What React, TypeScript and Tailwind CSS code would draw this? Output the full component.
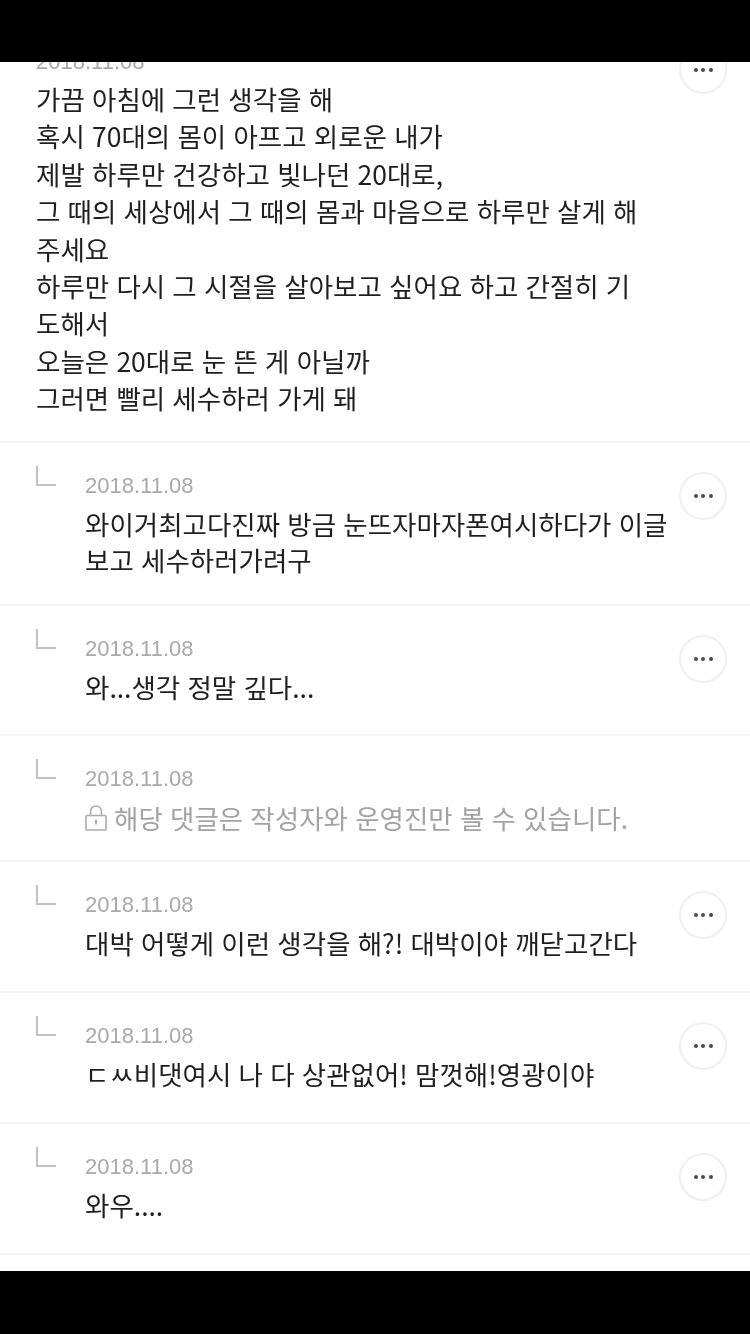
import type { ReactElement } from "react";

const font = "font-['Noto_Sans_CJK_KR','Noto_Sans',sans-serif]";

interface Reply {
  lines: string[];
  locked?: boolean;
}

const replies: Reply[] = [
  { lines: ["와이거최고다진짜 방금 눈뜨자마자폰여시하다가 이글", "보고 세수하러가려구"] },
  { lines: ["와...생각 정말 깊다..."] },
  { lines: ["해당 댓글은 작성자와 운영진만 볼 수 있습니다."], locked: true },
  { lines: ["대박 어떻게 이런 생각을 해?! 대박이야 깨닫고간다"] },
  { lines: ["ㄷㅆ비댓여시 나 다 상관없어! 맘껏해!영광이야"] },
  { lines: ["와우...."] },
];

const firstComment = [
  "가끔 아침에 그런 생각을 해",
  "혹시 70대의 몸이 아프고 외로운 내가",
  "제발 하루만 건강하고 빛나던 20대로,",
  "그 때의 세상에서 그 때의 몸과 마음으로 하루만 살게 해",
  "주세요",
  "하루만 다시 그 시절을 살아보고 싶어요 하고 간절히 기",
  "도해서",
  "오늘은 20대로 눈 뜬 게 아닐까",
  "그러면 빨리 세수하러 가게 돼",
];

function MoreButton(): ReactElement {
  return (
    <button
      type="button"
      aria-label="더보기"
      className="flex size-[48px] shrink-0 items-center justify-center gap-[3.5px] rounded-full border-2 border-[#efefef] bg-white"
    >
      <span className="size-[4px] rounded-full bg-[#4a4a4a]" />
      <span className="size-[4px] rounded-full bg-[#4a4a4a]" />
      <span className="size-[4px] rounded-full bg-[#4a4a4a]" />
    </button>
  );
}

function ReplyArrow(): ReactElement {
  return (
    <svg width="22" height="22" viewBox="0 0 22 22" fill="none" className="block">
      <path d="M2 1V20H21" stroke="#c2c2c2" strokeWidth="2" />
    </svg>
  );
}

function LockIcon(): ReactElement {
  return (
    <svg width="22" height="26" viewBox="0 0 22 26" fill="none" className="mr-[7px] shrink-0">
      <rect x="1" y="10.5" width="20" height="14.5" rx="1" stroke="#aeaeae" strokeWidth="1.7" />
      <path d="M5.5 10.5V7C5.5 3.5 7.8 1 11 1C14.2 1 16.5 3.5 16.5 7V10.5" stroke="#aeaeae" strokeWidth="1.7" />
      <circle cx="11" cy="16" r="1.5" fill="#aeaeae" />
      <path d="M11 16V19.5" stroke="#aeaeae" strokeWidth="1.7" />
    </svg>
  );
}

function DateLabel(): ReactElement {
  return (
    <div className="h-[37px] font-['Liberation_Sans',sans-serif] text-[22px] leading-[37px] text-[#a9a9a9]">
      2018.11.08
    </div>
  );
}

function ReplyRow({ reply }: { reply: Reply }): ReactElement {
  return (
    <div
      className={`flex border-b-2 border-[#f3f3f3] pl-[35px] pr-[23px] pt-[24px] ${
        reply.locked ? "pb-[24px]" : "min-h-[130.8px] pb-[26px]"
      }`}
    >
      <div className="-mt-[2px] w-[50px] shrink-0">
        <ReplyArrow />
      </div>
      <div className="min-w-0 flex-1">
        <DateLabel />
        {reply.locked ? (
          <div className="mt-[3px] flex h-[36px] items-center text-[26.5px] leading-[36px] text-[#a3a3a3] [word-spacing:1.3px]">
            <LockIcon />
            {reply.lines[0]}
          </div>
        ) : (
          <div className="mt-[2px] text-[26.5px] leading-[36px] text-[#1f1f1f] [word-spacing:1.3px]">
            {reply.lines.map((line) => (
              <div key={line} className="whitespace-nowrap">
                {line}
              </div>
            ))}
          </div>
        )}
      </div>
      {reply.locked ? null : (
        <div className="mt-[5px]">
          <MoreButton />
        </div>
      )}
    </div>
  );
}

export default function App(): ReactElement {
  return (
    <div className={`flex h-[1334px] w-[750px] flex-col overflow-hidden bg-black ${font}`}>
      <div className="h-[62px] shrink-0 bg-black" />
      <div className="h-[1209px] shrink-0 overflow-hidden bg-white">
        <div className="-mt-[19px] blur-[0.6px]">
          <div className="flex border-b-2 border-[#f3f3f3] pb-[24px] pl-[36px] pr-[23px]">
            <div className="min-w-0 flex-1">
              <DateLabel />
              <div className="text-[26.5px] leading-[37.4px] text-[#1f1f1f] [word-spacing:1.3px]">
                {firstComment.map((line) => (
                  <div key={line} className="whitespace-nowrap">
                    {line}
                  </div>
                ))}
              </div>
            </div>
            <div className="mt-[3px]">
              <MoreButton />
            </div>
          </div>
          {replies.map((reply) => (
            <ReplyRow key={reply.lines[0]} reply={reply} />
          ))}
        </div>
      </div>
      <div className="flex-1 bg-black" />
    </div>
  );
}
